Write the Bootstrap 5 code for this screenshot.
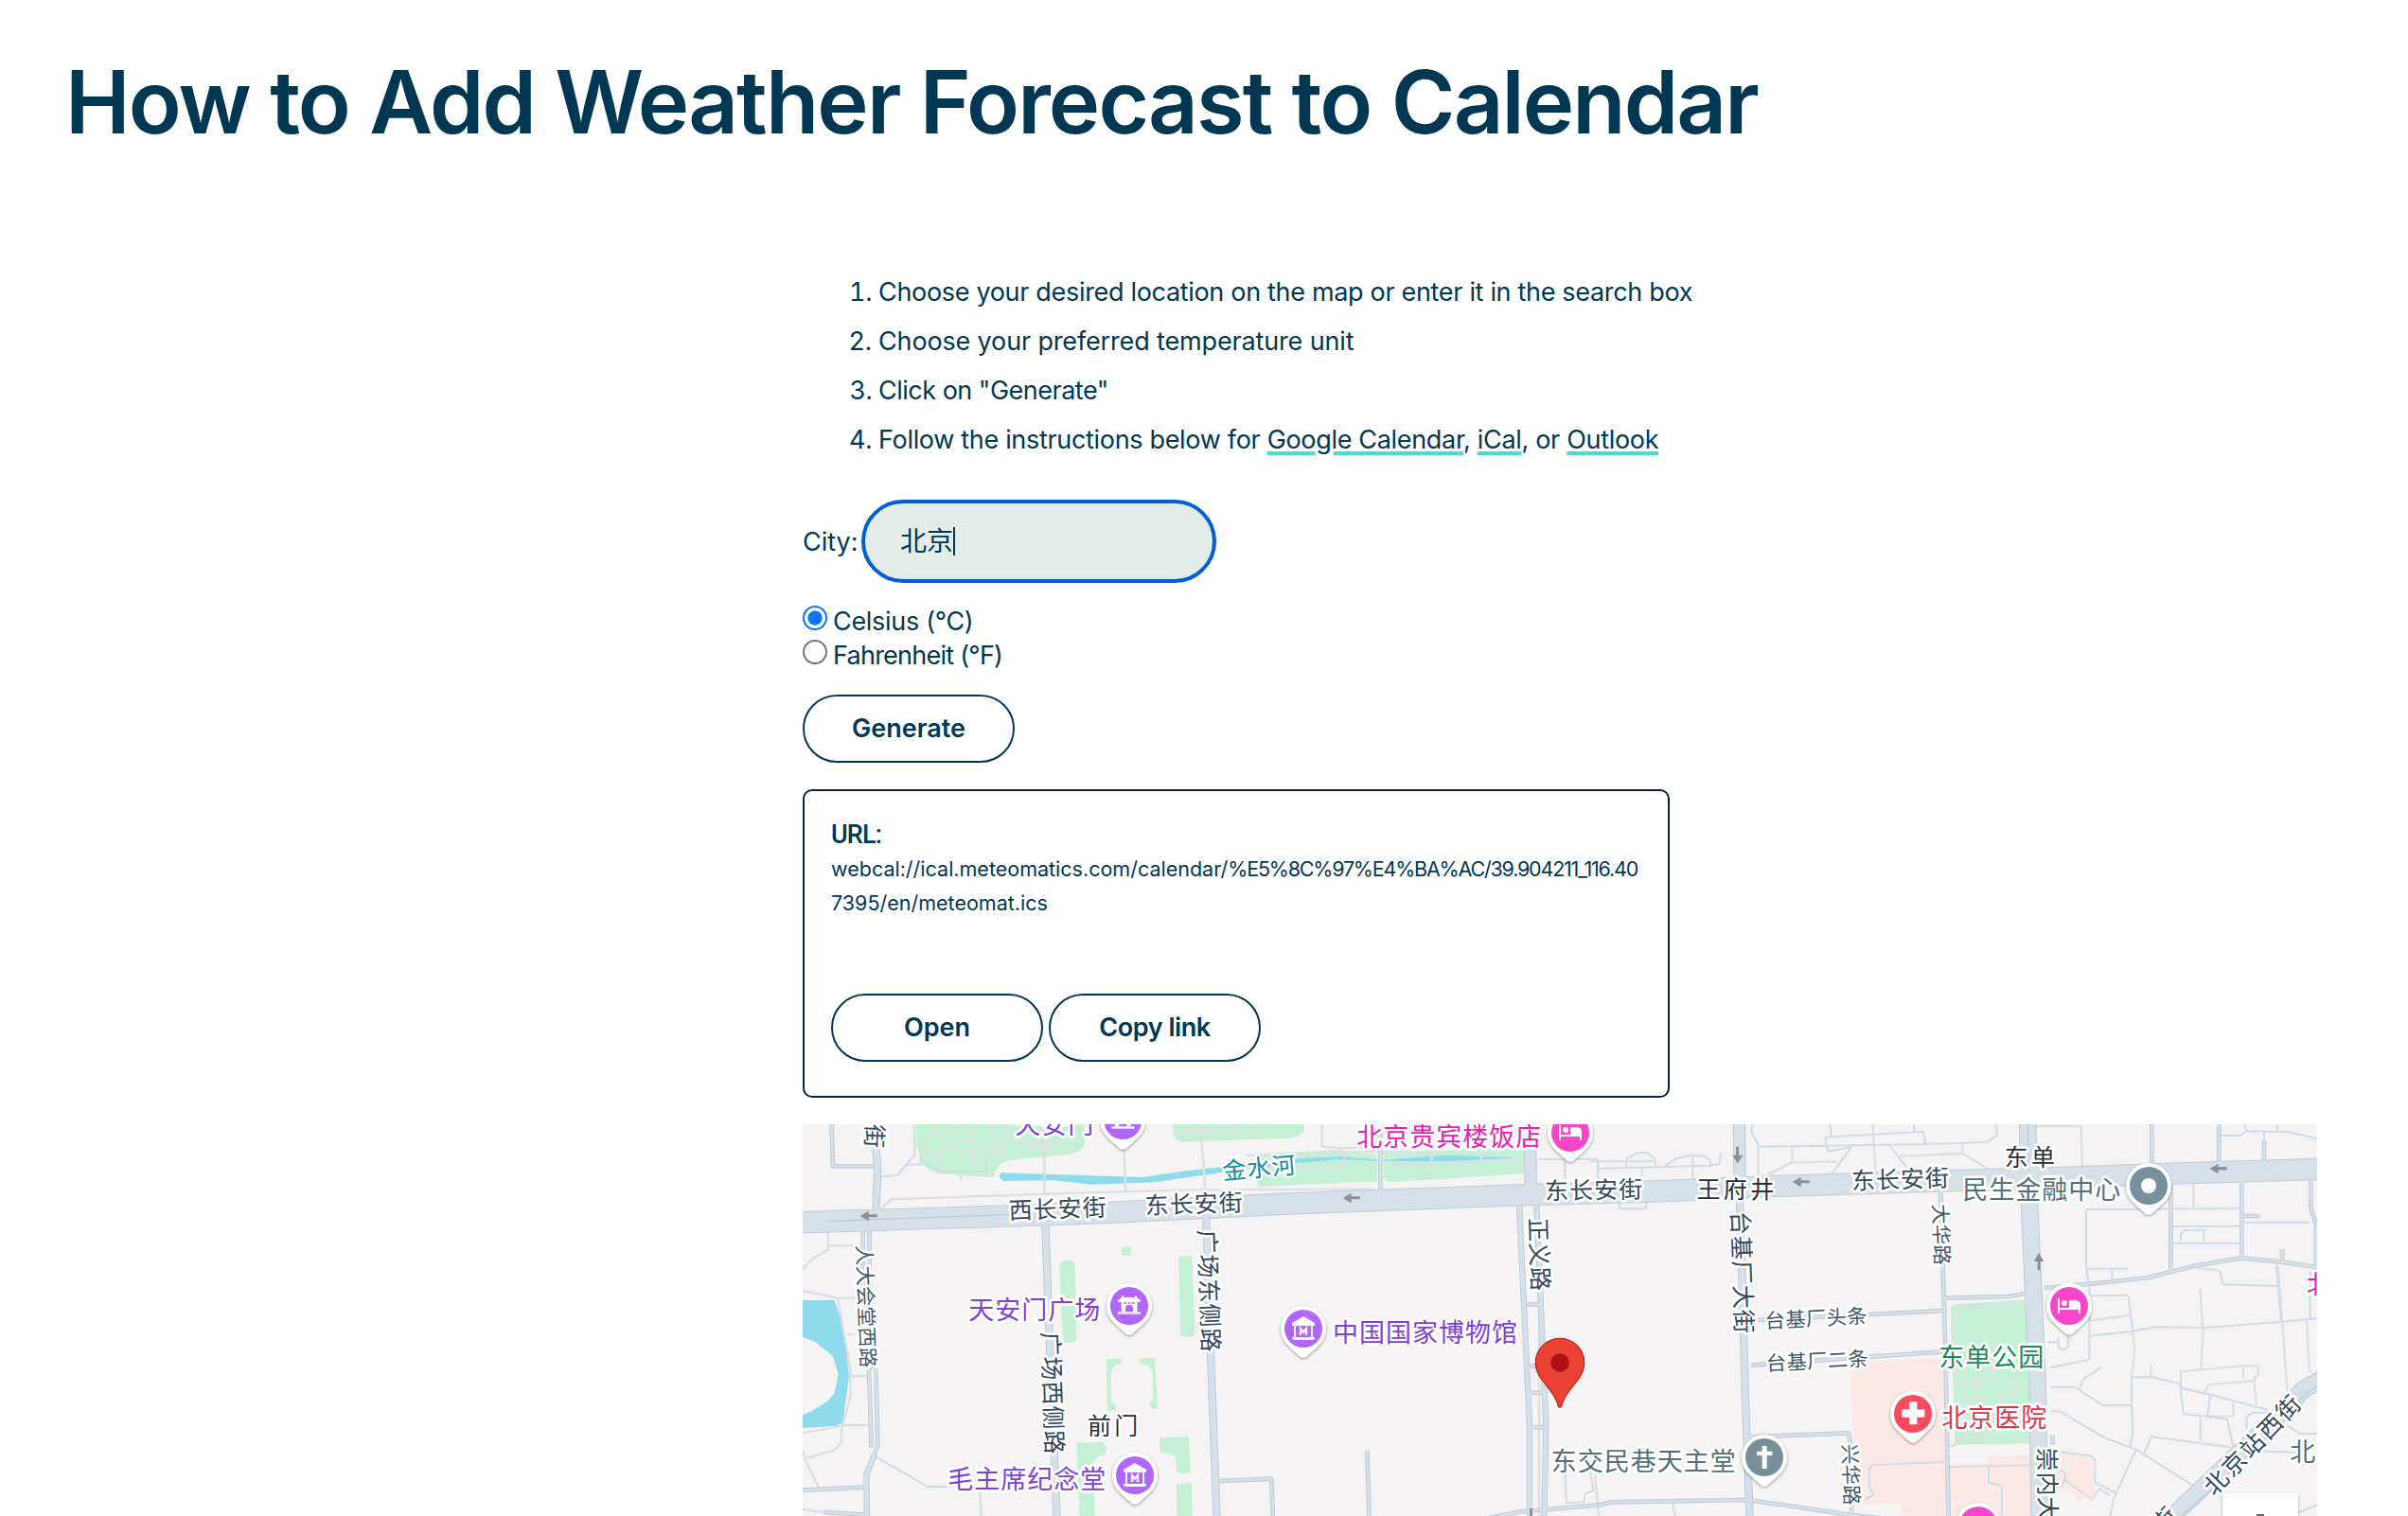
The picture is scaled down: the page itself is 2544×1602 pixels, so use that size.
<!DOCTYPE html>
<html lang="en">
<head>
<meta charset="utf-8">
<title>How to Add Weather Forecast to Calendar</title>
<link href="https://cdn.jsdelivr.net/npm/bootstrap@5.3.0/dist/css/bootstrap.min.css" rel="stylesheet">
<style>
body{font-family:Inter,"Noto Sans CJK SC",sans-serif;color:#003753;background:#fff;height:1602px;overflow:hidden;font-size:27px;line-height:36px}
.page-title{font-size:92px;font-weight:600;letter-spacing:-1.87px;line-height:120px;padding:48px 0 0 69px;height:282px;margin:0;white-space:nowrap}
.main-col{padding-left:848px}
.steps{padding:1px 0 0 80px;margin:0 0 28px;height:218px}
.steps li{line-height:52px;height:52px;white-space:nowrap;letter-spacing:-.32px}
.steps li:nth-child(2){letter-spacing:-.15px}
.steps li:nth-child(3){letter-spacing:-.5px}
.steps a{color:inherit;text-decoration:underline;text-decoration-color:#40e0d0;text-decoration-thickness:4px;text-underline-offset:3px}
.city-row{height:88px}
.city-lbl{width:62px;white-space:nowrap;padding-top:2px}
.city-input{width:375px;height:88px;border:4px solid #005fd7;border-radius:44px;background:#e4ece9;color:#003753;font-size:28px;padding:0 0 0 37px;line-height:40px}
.caret-bar{width:2px;height:30px;background:#003753}
.units{margin-top:24px;height:94px}
.unit-row{height:36px}
.unit-row input{width:26px;height:26px;margin:0 6px 0 0;flex:none;background:#fff;border:2px solid #767676;border-radius:50%;appearance:none}
.unit-row input:checked{border-color:#0a75ff;background:radial-gradient(circle,#0a75ff 7.2px,#fff 8px)}
.unit-row label{margin-top:-1px;white-space:nowrap;letter-spacing:-.3px}
.unit-row + .unit-row label{letter-spacing:-.75px}
.pill{width:224px;height:72px;border:2px solid #003753;border-radius:36px;color:#003753;font-size:27px;font-weight:600;padding:0;line-height:68px;background:#fff;white-space:nowrap}
.pill-copy{letter-spacing:-.45px}
.pill-gap{gap:6px}
.url-box{width:916px;height:326px;margin-top:28px;border:2px solid #00244c;border-radius:10px;padding:28px 0 0 28px;background:#fff}
.url-head{font-family:Roboto,sans-serif;font-weight:500;height:36px;font-size:27px;letter-spacing:-.8px}
.url-text{font-size:21.5px;line-height:36px;height:150px;white-space:nowrap}
.url-code{letter-spacing:-1.2px}
.map-view{width:1600px;height:414px;margin-top:28px;display:block}
.roads path{fill:none;stroke-linejoin:round;stroke-width:calc(var(--w) + var(--edge))}
.casing{--edge:6px;stroke:#bfcbd5}
.fill{--edge:0px;stroke:#d7e0e8}
.w66{--w:64px}.w52{--w:50px}.w36{--w:34px}.w22{--w:19px}.w16{--w:13px}.w10{--w:8px}
.lane path{fill:none;stroke:#d0dce6;stroke-width:6;stroke-linejoin:round}
.walk path{fill:none;stroke:#dddfe3;stroke-width:7;stroke-linejoin:round}
.green{fill:#c4f1d5}.water{fill:#90daee}.clinic{fill:#fce8e6}
.txt text{font-family:"Noto Sans CJK SC",sans-serif;text-anchor:middle;paint-order:stroke;stroke:#fff;stroke-width:16px;stroke-linejoin:round}
.road-t{font-size:75px;letter-spacing:3px;fill:#33475b}
.small-t{font-size:64px;letter-spacing:1px;fill:#44586c}
.area-t{font-size:75px;letter-spacing:10px;fill:#2b2f33}
.poi-t{font-size:81px;letter-spacing:3px}
</style>
</head>
<body>
<h1 class="page-title">How to Add Weather Forecast to Calendar</h1>
<main class="main-col">
<ol class="steps">
<li>Choose your desired location on the map or enter it in the search box</li>
<li>Choose your preferred temperature unit</li>
<li>Click on "Generate"</li>
<li>Follow the instructions below for <a href="#">Google Calendar</a>, <a href="#">iCal</a>, or <a href="#">Outlook</a></li>
</ol>
<div class="city-row d-flex align-items-center">
<label class="city-lbl">City:</label>
<div class="city-input form-control d-flex align-items-center" role="textbox">北京<span class="caret-bar"></span></div>
</div>
<div class="units">
<div class="unit-row d-flex"><input type="radio" name="u" id="uc" checked><label for="uc">Celsius (°C)</label></div>
<div class="unit-row d-flex"><input type="radio" name="u" id="uf"><label for="uf">Fahrenheit (°F)</label></div>
</div>
<button class="btn pill d-block">Generate</button>
<div class="url-box">
<div class="url-head">URL:</div>
<div class="url-text">webcal://ical.meteomatics.com/calendar/<span class="url-code">%E5%8C%97%E4%BA%AC/39.904211_116.40</span><br>7395/en/meteomat.ics</div>
<div class="d-flex pill-gap"><button class="btn pill">Open</button><button class="btn pill pill-copy">Copy link</button></div>
</div>
<svg class="map-view" viewBox="24 24 4800 1242">
<defs>
<g id="pin"><path d="M0-72A72 72 0 0 0-56 45C-38 64-22 78-13 86Q0 97 13 86C22 78 38 64 56 45A72 72 0 0 0 0-72Z" fill="#fff" filter="url(#sh)"/></g>
<filter id="sh" x="-30%" y="-30%" width="160%" height="170%"><feDropShadow dx="0" dy="4" stdDeviation="4" flood-opacity=".38"/></filter>
<g id="arrow"><path d="M-27 0L0-16V-5H27V4H0V16Z" fill="#8b9093"/></g>
<g id="museum" fill="#fff"><path d="M0-39L36-18V-10H-36V-18Z"/><path fill-rule="evenodd" d="M-30-12H30V36H-30ZM-24-9V27H24V-9Z"/><path d="M-36 27H36V34H-36Z"/><path d="M-9 21V0L0 11L9 0V21" fill="none" stroke="#fff" stroke-width="7"/></g>
<g id="gate" fill="#fff"><path d="M-24-32H-18V-27H18V-32H24V-27L36-17V-12H-36V-17L-24-27Z"/><path fill-rule="evenodd" d="M-25-12H25V19H12V8A12 12 0 0 0-12 8V19H-25ZM-17-12V-7H-9V-12ZM-4-12V-7H4V-12ZM9-12V-7H17V-12Z"/><path d="M-36 19H36V26H-36Z"/></g>
<g id="bed" fill="#fff"><path d="M-36-24H-30V6H30V-2H36V24H30V12H-30V24H-36Z"/><circle cx="-15" cy="-9" r="9"/><path d="M0-17H20Q36-17 36-2V6H0Z"/></g>
<g id="net" class="roads">
<path class="w66" d="M0 336L985 305L1560 276L2310 248L2720 237L3090 221L3640 204L4020 193L4340 181L4840 166"/>
<path class="w22" d="M256 0V100L262 160L256 300"/><path class="w10" d="M115 0L120 157H250"/>
<path class="w10" d="M215 360V600M235 360L240 800"/>
<path class="w10" d="M234 800L242 1050M256 800L262 1040L250 1080"/><path class="w16" d="M252 1070L226 1135L228 1280"/><path class="w10" d="M0 1185L220 1175M90 1254L225 1262"/>
<path class="w22" d="M793 340L810 800L830 1280"/>
<path class="w22" d="M1303 320L1318 780L1337 1280"/>
<path class="w10" d="M1345 1155L1510 1148L1515 1280M1813 1058L1820 1280"/>
<path class="w10" d="M1855 30V240"/>
<path class="w36" d="M2330 100L2332 230"/>
<path class="w16" d="M2295 280L2328 980V1280M2350 280L2380 980L2374 1280"/>
<path class="w10" d="M2320 595H2360M2330 790H2370M2336 875H2376M2340 985H2378"/>
<path class="w10" d="M2150 1282L2300 1252L2540 1232L2590 1222L3020 1215L3340 1262L3500 1280"/>
<path class="w36" d="M2992 0L2994 210"/><path class="w22" d="M2994 250L3012 900L3026 1280"/>
<path class="w10" d="M3050 645L3640 615M3030 788L3640 745M3030 1015L3340 1003L3346 1045M3348 1230V1280"/>
<path class="w10" d="M3630 235L3645 700L3656 1280M3645 575L3850 570L3900 560"/>
<path class="w52" d="M3906 0L3910 230L3938 850L3944 1280"/>
<path class="w10" d="M3960 543L4160 525L4290 510L4360 492L4440 472L4585 448L4720 462L4840 480"/>
<path class="w10" d="M4300 0V160M4513 0V150M4656 75V145M4360 210V490M4585 200V445M4590 315H4645M4713 420V460M4804 200V290L4820 340V480M3985 1010V1040"/>
<path class="w52" d="M4330 1300L4430 1205L4720 930L4780 865L4850 825"/>
</g>
</defs>
<rect x="24" y="24" width="4800" height="1242" fill="#f5f3f4"/>
<g class="green">
<path d="M383 24H916V90Q910 110 870 120L700 135Q650 140 640 165L625 193L450 180Q400 160 396 130L385 90Z"/>
<path d="M1198 24H1613V45Q1600 66 1560 68L1240 80Q1205 80 1200 60Z"/>
<path d="M1465 130Q1466 116 1480 117L1700 106L1845 120V205L1475 222Q1464 222 1464 210Z"/>
<path d="M1865 112L2310 98V180L1900 207Q1868 208 1865 190Z"/>
<rect x="1034" y="412" width="30" height="28" rx="6"/><path d="M838 470Q840 456 856 456H878Q887 460 887 470L892 702Q890 716 876 716H862Q850 714 848 700Z"/>
<path d="M1215 445L1258 441L1268 690Q1262 700 1222 698Z"/>
<path d="M986 768L1035 766V782L1015 786L1002 808V905Q1018 910 1017 932L990 933ZM1092 766L1140 765L1149 925Q1125 932 1122 908L1134 900V810L1118 788L1092 780Z"/>
<path d="M892 1035L975 1032Q992 1050 984 1072Q950 1075 945 1100L950 1266H902ZM1155 1018L1248 1014L1252 1128Q1230 1136 1210 1126L1205 1072L1156 1064ZM1208 1165L1256 1162L1260 1266H1210Z"/>
<path d="M3662 610Q3666 596 3690 594L3900 580L3918 1036L3676 1040Z"/>
</g>
<g class="water">
<path d="M24 582H125L155 670L171 820L152 970L130 980L24 988V945L50 935L105 900L125 875L137 815L120 760L65 715L24 698Z"/>
<path d="M652 178L1100 192L1250 170L1430 152L1560 135L1720 126L1860 138L2060 122L2290 130L2200 136L2050 142L1850 140L1720 136L1560 150L1430 166L1260 190L1140 208L940 215L820 202L660 204L647 192Z"/>
</g>
<g class="clinic"><path d="M3342 800L3400 774L3640 766L3650 1280H3514L3508 1228L3385 1230L3360 1080Z"/><path d="M3656 1100H3780V1080L3920 1070V1280H3660Z"/><path d="M4005 1062L4110 1076L4122 1205L4065 1218L4050 1190L3990 1180Z"/></g>
<g class="walk">
<path d="M440 24L445 50L400 75M445 50L475 90L450 125L475 165M475 90L560 125L600 150M450 125L400 100M500 40L520 25L555 45V70L530 85L505 70ZM555 100L590 95L600 140L570 150ZM625 24V70L630 125L660 120L655 70M630 80H860M665 24V55L700 60V80M745 80V96H820V80M790 24V245M1043 100L1047 240M1200 48L1500 42M1390 24V45M1285 24L1300 230"/>
<path d="M270 295L305 262L790 245L1260 232L1830 230M24 552L135 575H190M135 575L175 800V890L150 980L24 1003M105 360V422L55 450L24 485M108 409H190M165 690H190M180 822H240M150 978H240M150 978L145 1035L120 1060L30 1083L75 1175M24 1245L90 1254M30 1083L24 1060"/>
<path d="M1670 24V95L1730 100L1745 145L1700 160L1450 162M1730 100L1855 95M1430 122L1640 124L1700 112L2050 110M2018 115V145M1880 150L2000 155L2180 140L2300 142M2175 100V142"/>
<path d="M2342 285H2350M2348 285L2358 600V1280M3415 24L3425 180M3052 95V190M3160 97V145L3300 143M3160 145L3070 190M3500 125L3700 117V84M3700 117L3790 170M2535 1130L2548 1280"/>
<path d="M3668 640L3695 605L3900 592M3668 640L3670 760L3692 850L3795 840V790M3692 850L3720 920L3750 885L3745 840M3750 885L3780 915L3745 940L3720 920M3815 900L3830 870L3890 865L3910 842M3864 790V1000M3740 780L3750 840M3720 1000L3755 1020L3800 1000M3660 1045L3700 1030L3720 985"/>
<path d="M3930 30H4075L4080 160M4432 205V290M4440 480L4510 487M4453 545L4462 680L4456 800M4100 648L4230 630M4240 680L4246 740L4236 825M4070 865L4085 830L4140 795M4298 785V825M4392 865V808L4585 790H4638V815L4620 838L4480 850L4465 880M4590 790V830M4624 838L4632 920M4700 470L4730 880M4790 640L4800 810M4392 860L4480 880M4558 905V950H4470M4540 960L4558 1050M4020 1150L4110 1212L4135 1180L4165 1200M4765 1255L4824 1232"/>
</g>
<g class="lane">
<path d="M377 24L380 120L325 186L275 190M355 152L420 150L465 174H607V128M525 174V203M398 120V150M250 1075L420 1173H500M586 1190L590 1266M2355 135H2545M2440 140V200M2545 140V180M3690 84L3780 80L3808 60V24M3690 85L3270 92L3265 65H3270L3575 47L3583 90M3270 92L3275 110L3350 95M3350 95L3282 185M3468 90L3530 170M3280 24L3285 65M3547 24V50M3032 24V50L3055 95L3270 92"/>
<path d="M2520 142H2720M2545 165L2900 155L2930 150L2934 115M2545 142V200M2634 160V135L2670 114H2700L2726 135V160M2757 156L2790 134L2830 124H2880L2900 138V155M2845 120V200M2612 265V292H2697V260M2684 160V200M2440 1120L2445 1225L2500 1222L2505 1195L2530 1185L2520 1120M2780 1220L2790 1266"/>
<path d="M3390 1212L3418 1200L3405 1170V1120L3412 1105L3640 1095M3660 1110L3920 1105M3783 1110V1160L3825 1170V1266M4092 295V480L4102 540V770L3980 795M4092 295L4580 290M4095 482H4225M4174 485V515M4365 348L4585 347M4392 400V372L4405 360H4465V400M4365 401H4585M4595 335H4800M4520 60H4580L4600 46L4730 48L4824 70M4595 24L4600 46M4698 24V46M4656 50V75M4106 568L4225 566L4240 680L4102 695M4240 680L4310 667L4462 670L4710 650L4824 640M4515 487L4525 532L4700 537M4694 470L4710 650M4802 490V640M3980 857H4055L4145 915H4235M4236 825V915L4240 1005L4232 1045M4236 825L4300 826L4390 847L4400 942L4470 950L4540 960M4392 860L4480 880L4670 930M4485 885L4476 950M4454 955V1030M3980 933L4010 935L4150 1018L4250 1055L4440 1175M4250 1055L4180 1210L4165 1280M4275 1070L4298 1015L4550 1048M4004 700V730Q4020 745 4035 730V690M3970 715H4005M4600 990V960Q4605 940 4625 938H4690M4730 980L4770 1005H4824M4640 1060L4780 1066M4010 1062L4110 1076L4120 1090V1160L4190 1195M4005 1115L4025 1130V1150L4010 1175"/>
</g>
<use href="#net" class="casing"/><use href="#net" class="fill"/>
<g fill="none" stroke="#bfcbd5" stroke-width="4"><path d="M100 332L680 310M4380 1280L4600 1080L4790 875L4850 840M3908 24V170"/></g>
<use href="#arrow" x="233" y="315"/><use href="#arrow" x="1763" y="258"/><use href="#arrow" x="3188" y="207"/><use href="#arrow" x="4511" y="165"/>
<use href="#arrow" transform="translate(2987 122) rotate(-90)"/><use href="#arrow" transform="translate(3942 459) rotate(90)"/><path d="M2328 1242H2337V1266H2328Z" fill="#8b9093"/>
<g class="txt">
<g class="road-t">
<text transform="translate(253 63) rotate(92)" dy=".38em">街</text>
<text transform="translate(833 291) rotate(-2)" dy=".38em">西长安街</text>
<text transform="translate(1265 275) rotate(-2)" dy=".38em">东长安街</text>
<text transform="translate(2532 231) rotate(-1)" dy=".38em">东长安街</text>
<text transform="translate(3504 197) rotate(-2)" dy=".38em">东长安街</text>
<text transform="translate(817 877) rotate(88)" dy=".38em">广场西侧路</text>
<text transform="translate(1313 553) rotate(88)" dy=".38em">广场东侧路</text>
<text transform="translate(2360 438) rotate(88)" dy=".38em">正义路</text>
<text transform="translate(3003 495) rotate(88)" dy=".38em">台基厂大街</text>
<text transform="translate(3971 1205) rotate(89)" dy=".38em">崇内大街</text>
<text transform="translate(4620 1038) rotate(-46)" dy=".38em" letter-spacing="7">北京站西街</text>
<text transform="translate(4340 1276) rotate(-46)" dy=".38em">街</text>
</g>
<g class="small-t">
<text transform="translate(226 602) rotate(88)" dy=".38em">人大会堂西路</text>
<text transform="translate(3634 374) rotate(88)" dy=".38em">大华路</text>
<text transform="translate(3347 1135) rotate(88)" dy=".38em">兴华路</text>
<text transform="translate(3236 638) rotate(-3)" dy=".38em">台基厂头条</text>
<text transform="translate(3240 773) rotate(-3)" dy=".38em">台基厂二条</text>
</g>
<g class="area-t">
<text x="1012" y="979" dy=".38em">前门</text><text x="2985" y="230" dy=".38em">王府井</text><text x="3918" y="128" dy=".38em">东单</text>
</g>
<g class="poi-t">
<g fill="#8040d8"><text x="823" y="23" dy=".38em">天安门</text><text x="760" y="610" dy=".38em">天安门广场</text><text x="736" y="1148" dy=".38em">毛主席纪念堂</text><text x="1998" y="683" dy=".38em">中国国家博物馆</text></g>
<g fill="#e91eb0"><text x="2074" y="62" dy=".38em">北京贵宾楼饭店</text><text x="4832" y="529" dy=".38em">北</text></g>
<g fill="#546e7a"><text x="3952" y="230" dy=".38em">民生金融中心</text><text x="2690" y="1090" dy=".38em">东交民巷天主堂</text><text x="4780" y="1062" dy=".38em">北</text></g>
<text x="3793" y="761" dy=".38em" fill="#188a5c">东单公园</text><text x="3802" y="954" dy=".38em" fill="#dc3545">北京医院</text>
<text transform="translate(1471 161) rotate(-5) scale(.93)" dy=".38em" fill="#128a9e">金水河</text>
</g></g>
<g transform="translate(1039 12)"><use href="#pin"/><circle r="60" fill="#b266ff"/><use href="#gate"/></g>
<g transform="translate(1059 600)"><use href="#pin"/><circle r="60" fill="#b266ff"/><use href="#gate"/></g>
<g transform="translate(1077 1137)"><use href="#pin"/><circle r="60" fill="#b266ff"/><use href="#museum"/></g>
<g transform="translate(1611 672)"><use href="#pin"/><circle r="60" fill="#b266ff"/><use href="#museum"/></g>
<g transform="translate(2457 51)"><use href="#pin"/><circle r="60" fill="#fb46cb"/><use href="#bed"/></g>
<g transform="translate(4038 600)"><use href="#pin"/><circle r="60" fill="#fb46cb"/><use href="#bed"/></g>
<g transform="translate(3750 1296)"><use href="#pin"/><circle r="60" fill="#fb46cb"/></g>
<g transform="translate(3543 942)"><use href="#pin"/><circle r="60" fill="#fa4a5b"/><path d="M-12-38H13V-14H37V11H13V34H-12V11H-36V-14H-12Z" fill="#fff"/></g>
<g transform="translate(3072 1080)"><use href="#pin"/><circle r="60" fill="#78909c"/><path d="M-7-36H8V-19H25V-6H8V36H-7V-6H-24V-19H-7Z" fill="#fff"/></g>
<g transform="translate(4290 219)"><use href="#pin"/><circle r="60" fill="#78909c"/><circle r="24" fill="#fff"/></g>
<path d="M2424 703A77 77 0 0 0 2347 780C2347 837 2405 858 2418 915Q2424 930 2430 915C2443 858 2501 837 2501 780A77 77 0 0 0 2424 703Z" fill="#ea4335" stroke="#c5221f" stroke-width="4"/><circle cx="2424" cy="780" r="30" fill="#b31412"/>
<rect x="4524" y="1194" width="240" height="120" fill="#fff" filter="url(#sh)"/><path d="M4632 1260H4656V1266H4632Z" fill="#666"/>
</svg>
</main>
<script src="https://cdn.jsdelivr.net/npm/bootstrap@5.3.0/dist/js/bootstrap.bundle.min.js"></script>
</body>
</html>
